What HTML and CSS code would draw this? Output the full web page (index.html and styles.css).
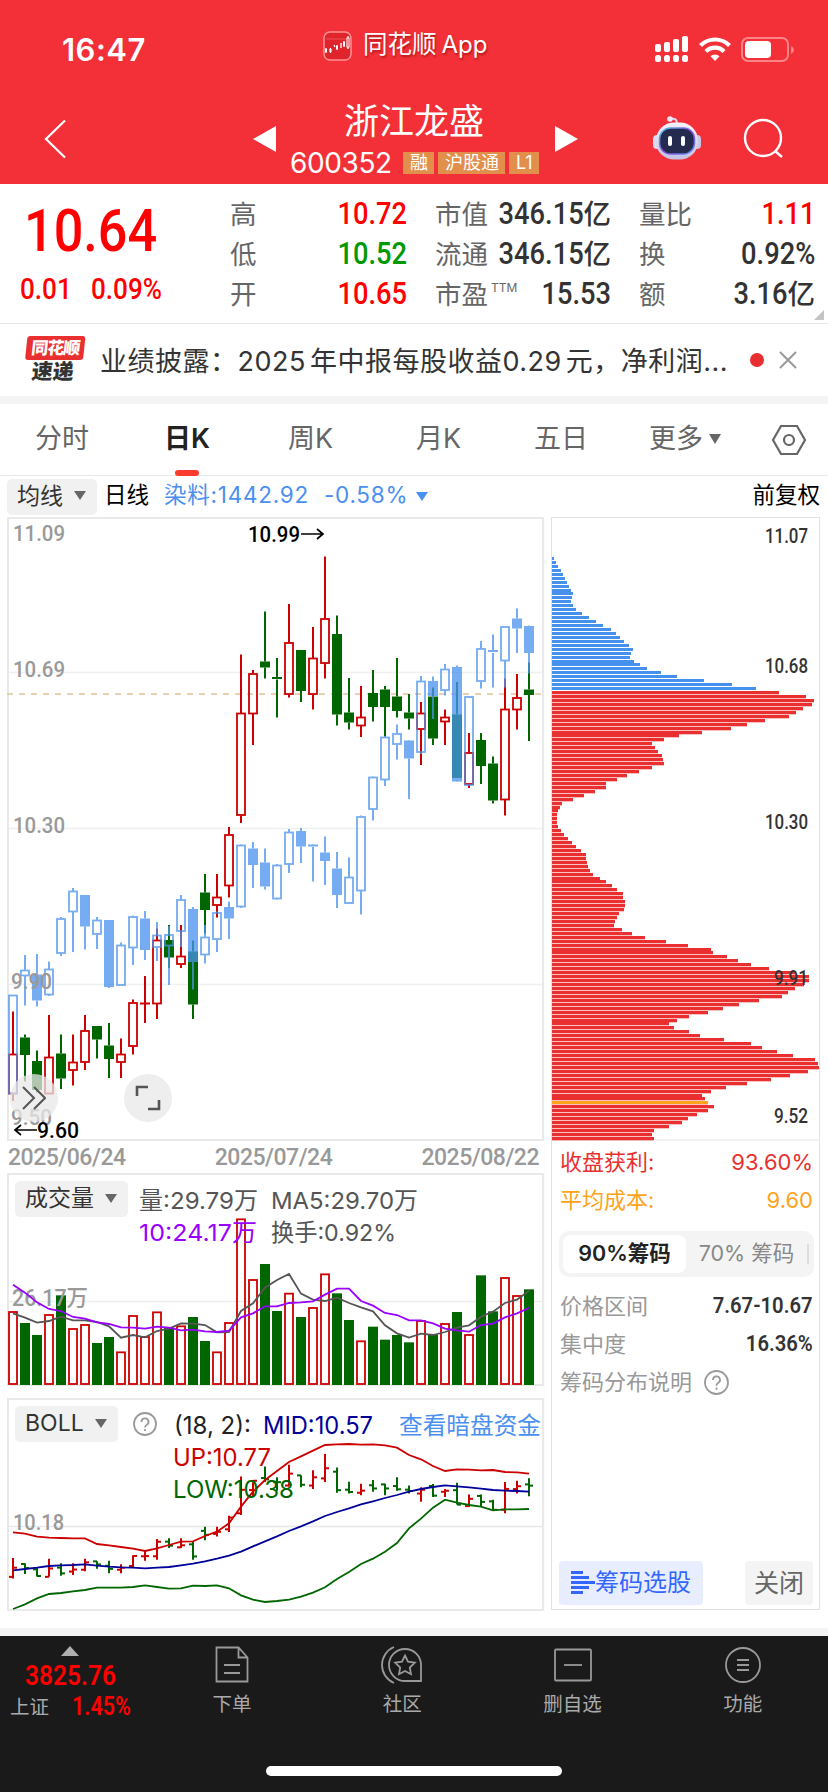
FILE: index.html
```html
<!DOCTYPE html>
<html lang="zh-CN">
<head>
  <meta charset="UTF-8">
  <title>浙江龙盛 600352</title>
  <link rel="stylesheet" href="styles.css">
</head>
<body>

<div class="app">
  <header class="top">
    <div class="status">
      <span class="clock">16:47</span>
      <span class="brand">
        <svg width="29" height="30" viewBox="0 0 29 30">
          <rect x="1" y="1" width="27" height="28" rx="6" fill="#e0242c" stroke="#ff9094" stroke-width="1.5"/>
          <path d="M3 8h23" stroke="#ee5055" stroke-width="1"/>
          <path d="M3 17v5M7.500 17v5M11 14l1 2M14 14v5M18 12v5M21 10v6M25 5v13" stroke="#fff" stroke-width="1.300"/>
          <path d="M2 18h2v3H2zM6.500 18h2v3h-2zM13 15h2v3h-2zM20 11h2v4h-2z" fill="#fff"/>
          <rect x="24" y="7" width="2" height="9" fill="#e0242c" stroke="#fff"/>
        </svg>
        <span>同花顺<i>App</i></span>
      </span>
      <span class="signals">
        <svg width="34" height="27" viewBox="0 0 34 27" fill="#fff">
          <rect x="0" y="8" width="6" height="8" rx="2"/><rect x="9" y="6" width="6" height="10" rx="2"/>
          <rect x="18" y="3" width="6" height="13" rx="2"/><rect x="27" y="0" width="6" height="16" rx="2"/>
          <rect x="0" y="19" width="6" height="7" rx="2.500"/><rect x="9" y="19" width="6" height="7" rx="2.500"/>
          <rect x="18" y="19" width="6" height="7" rx="2.500"/><rect x="27" y="19" width="6" height="7" rx="2.500"/>
        </svg>
        <svg width="32" height="25" viewBox="0 0 32 25" fill="none" stroke="#fff" stroke-width="4.200">
          <path d="M1.500 8.500a20.500 20.500 0 0 1 29 0"/>
          <path d="M7 14.500a12.500 12.500 0 0 1 18 0"/>
          <path d="M11.500 19.200a6.500 6.500 0 0 1 9 0L16 24z" fill="#fff" stroke="none"/>
        </svg>
        <svg width="53" height="26" viewBox="0 0 53 26">
          <rect x="1" y="1" width="46" height="23" rx="6" fill="none" stroke="#fa8488" stroke-width="2"/>
          <rect x="4" y="4" width="26" height="17" rx="4" fill="#fff"/>
          <path d="M50 9q3 1.500 3 4t-3 4z" fill="#fa8488"/>
        </svg>
      </span>
    </div>
    <div class="nav">
      <svg class="back" width="23" height="40" viewBox="0 0 23 40"><path d="M21 1.500L2 20l19 18.500" fill="none" stroke="#fff" stroke-width="2.200"/></svg>
      <svg class="prev" width="23" height="26" viewBox="0 0 23 26"><path d="M23 0v26L0 13z" fill="#fff"/></svg>
      <div class="title">
        <h1>浙江龙盛</h1>
        <div class="code"><span>600352</span><b>融</b><b>沪股通</b><b>L1</b></div>
      </div>
      <svg class="next" width="23" height="26" viewBox="0 0 23 26"><path d="M0 0v26l23-13z" fill="#fff"/></svg>
      <svg class="robot" width="48" height="44" viewBox="0 0 48 44">
        <defs>
          <linearGradient id="shell" x1="0" y1="0" x2="0" y2="1"><stop offset="0" stop-color="#f6f2fb"/><stop offset="1" stop-color="#c3c2e2"/></linearGradient>
          <linearGradient id="rim" x1="0" y1="0" x2="1" y2="1"><stop offset="0" stop-color="#50c8e8"/><stop offset=".5" stop-color="#8a4be0"/><stop offset="1" stop-color="#5a8cf0"/></linearGradient>
        </defs>
        <path d="M17 3c6-1 7 1 7 5" fill="none" stroke="#d9d3ee" stroke-width="2"/>
        <circle cx="17" cy="3" r="2.800" fill="#ece8f7"/>
        <rect x="0" y="19" width="8" height="14" rx="4" fill="#dcdaf0"/>
        <rect x="40" y="19" width="8" height="14" rx="4" fill="#c9c8e6"/>
        <rect x="3" y="6.500" width="42" height="37" rx="18" fill="url(#shell)"/>
        <rect x="6.500" y="12" width="35" height="26" rx="11" fill="#252b4f" stroke="url(#rim)" stroke-width="1.500"/>
        <rect x="15" y="20" width="4" height="10" rx="2" fill="#fff"/><rect x="28" y="20" width="4" height="10" rx="2" fill="#fff"/>
      </svg>
      <svg class="search" width="42" height="42" viewBox="0 0 42 42" fill="none" stroke="#fff" stroke-width="2.400"><circle cx="20" cy="20" r="18"/><path d="M32 33l7 6"/></svg>
    </div>
  </header>

  <section class="quote">
    <div class="price">
      <strong class="din">10.64</strong>
      <p><span class="din">0.01</span><span class="din">0.09%</span></p>
    </div>
    <dl>
      <div><dt>高</dt><dd class="red"><span class="din">10.72</span></dd></div>
      <div><dt>低</dt><dd class="green"><span class="din">10.52</span></dd></div>
      <div><dt>开</dt><dd class="red"><span class="din">10.65</span></dd></div>
    </dl>
    <dl>
      <div><dt>市值</dt><dd><span class="din">346.15</span>亿</dd></div>
      <div><dt>流通</dt><dd><span class="din">346.15</span>亿</dd></div>
      <div><dt>市盈<sup>TTM</sup></dt><dd><span class="din">15.53</span></dd></div>
    </dl>
    <dl>
      <div><dt>量比</dt><dd class="red"><span class="din">1.11</span></dd></div>
      <div><dt>换</dt><dd><span class="din">0.92%</span></dd></div>
      <div><dt>额</dt><dd><span class="din">3.16</span>亿</dd></div>
    </dl>
    <svg class="corner" width="10" height="10" viewBox="0 0 10 10"><path d="M10 0v10H0z" fill="#c4c4c4"/></svg>
  </section>

  <section class="news">
    <div class="news-logo"><span>同花顺</span><em>速递</em></div>
    <p>业绩披露：<i>2025</i>年中报每股收益<i>0.29</i>元，净利润...</p>
    <span class="dot"></span>
    <svg width="18" height="18" viewBox="0 0 18 18"><path d="M1 1l16 16M17 1L1 17" stroke="#999" stroke-width="2"/></svg>
  </section>

  <nav class="tabs">
    <a>分时</a>
    <a class="active">日K</a>
    <a>周K</a>
    <a>月K</a>
    <a>五日</a>
    <a class="more">更多<svg width="12" height="10" viewBox="0 0 12 10"><path d="M0 0h12L6 10z" fill="#666"/></svg></a>
    <svg width="36" height="32" viewBox="0 0 36 32" fill="none" stroke="#666" stroke-width="2.200"><path d="M10 2h16l8 14-8 14H10L2 16z"/><circle cx="18" cy="16" r="5"/></svg>
  </nav>

  <div class="legend">
    <span class="pill">均线<svg width="12" height="9" viewBox="0 0 12 9"><path d="M0 0h12L6 9z" fill="#666"/></svg></span>
    <span class="day">日线</span>
    <span class="industry">染料:1442.92</span>
    <span class="industry pct">-0.58%</span>
    <svg width="12" height="9" viewBox="0 0 12 9"><path d="M0 0h12L6 9z" fill="#4a90f0"/></svg>
    <span class="adjust">前复权</span>
  </div>

  <main class="charts">
    <div class="left">
      <div class="panel kline">
        <svg id="kline" width="537" height="624" viewBox="7 517 537 624"></svg>
        <span class="round more-btn"><svg width="24" height="24" viewBox="0 0 24 24" fill="none" stroke="#555" stroke-width="2"><path d="M1 1l11 11L1 23M12 1l11 11-11 11"/></svg></span>
        <span class="round full-btn"><svg width="26" height="26" viewBox="0 0 26 26" fill="none" stroke="#555" stroke-width="2.600"><path d="M2 11V2h11M24 15v9H13"/></svg></span>
      </div>
      <div class="dates"><span>2025/06/24</span><span>2025/07/24</span><span>2025/08/22</span></div>
      <div class="panel volume">
        <svg id="volume" width="537" height="213" viewBox="7 1173 537 213"></svg>
        <span class="pill">成交量<svg width="12" height="9" viewBox="0 0 12 9"><path d="M0 0h12L6 9z" fill="#666"/></svg></span>
      </div>
      <div class="panel boll">
        <svg id="boll" width="537" height="213" viewBox="7 1398 537 213"></svg>
        <span class="pill">BOLL<svg width="12" height="9" viewBox="0 0 12 9"><path d="M0 0h12L6 9z" fill="#666"/></svg></span>
      </div>
    </div>

    <aside class="chips">
      <svg id="chips" width="268" height="623" viewBox="552 518 268 623"></svg>
      <div class="chip-info">
        <p class="gain"><span>收盘获利:</span><b>93.60%</b></p>
        <p class="cost"><span>平均成本:</span><b>9.60</b></p>
        <div class="segment"><span class="on">90%筹码</span><span>70% 筹码</span></div>
        <p><span>价格区间</span><b class="din">7.67-10.67</b></p>
        <p><span>集中度</span><b class="din">16.36%</b></p>
        <p class="explain"><span>筹码分布说明</span><svg width="25" height="25" viewBox="0 0 25 25" fill="none" stroke="#999" stroke-width="1.800"><circle cx="12.500" cy="12.500" r="11.500"/><path d="M9 10a3.500 3.500 0 1 1 5 3q-1.500.8-1.500 2.800M12.500 17.500v2.200"/></svg></p>
      </div>
      <div class="chip-actions">
        <span class="pick"><svg width="24" height="24" viewBox="0 0 24 24" fill="#3366ff"><path d="M0 0h12v3H0zM0 5h18v3H0zM0 10h24v3H0zM0 15h18v3H0zM0 20h12v3H0z"/></svg>筹码选股</span>
        <span class="close">关闭</span>
      </div>
    </aside>
  </main>

  <footer class="bar">
    <div class="items">
      <div class="index">
        <svg width="18" height="10" viewBox="0 0 18 10"><path d="M9 0l9 10H0z" fill="#b0b0b0"/></svg>
        <b class="din">3825.76</b>
        <p><span>上证</span><b class="din">1.45%</b></p>
      </div>
      <div class="item">
        <svg width="40" height="40" viewBox="0 0 40 40"><path d="M4.500 2.500h22l9 10v24h-31zM26.500 2.500v10h9M12 20h16M12 28h16"/></svg>
        <span>下单</span>
      </div>
      <div class="item">
        <svg width="42" height="40" viewBox="0 0 42 40"><path d="M24 4a16 16 0 0 1 16 16v16H24a16 16 0 0 1 0-32zM13 2a19.500 19.500 0 0 0 0 36M24 10.500l3 6.200 6.800 1-5 4.800 1.200 6.700-6-3.200-6 3.200 1.200-6.700-5-4.800 6.800-1z"/></svg>
        <span>社区</span>
      </div>
      <div class="item">
        <svg width="40" height="40" viewBox="0 0 40 40"><rect x="2" y="4.500" width="36" height="31" rx="1"/><path d="M11 20h18"/></svg>
        <span>删自选</span>
      </div>
      <div class="item">
        <svg width="40" height="40" viewBox="0 0 40 40"><circle cx="20" cy="20" r="17"/><path d="M14 15h12M14 20h12M14 25h12"/></svg>
        <span>功能</span>
      </div>
    </div>
    <div class="home"></div>
  </footer>
</div>

<script src="charts.js"></script>
</body>
</html>
```
FILE: styles.css
```css
body {
  margin: 0;
  background: #fff;
  font-family: Inter, 'Noto Sans CJK SC', sans-serif;
  color: #333;
}

.app {
  width: 828px;
  height: 1792px;
  overflow: hidden;
  display: flex;
  flex-direction: column;
}

svg {
  display: block;
  flex: none;
}

h1, p, dl, dd {
  margin: 0;
}

i, em {
  font-style: normal;
}

.din {
  font-family: Roboto, sans-serif;
  font-weight: 500;
  display: inline-block;
}

.red {
  color: #ff0000;
}

.green {
  color: #009900;
}

/* header */
.top {
  background: #f33038;
  color: #fff;
  height: 184px;
}

.status {
  height: 94px;
  display: flex;
  align-items: center;
  padding: 5px 34px 0 62px;
  box-sizing: border-box;
}

.clock {
  width: 170px;
  font-size: 31px;
  font-weight: 600;
  letter-spacing: 0.5px;
}

.brand {
  display: flex;
  gap: 11px;
  align-items: center;
  font-size: 24.5px;
  line-height: 30px;
  margin-top: -8px;
  margin-left: 91px;
  text-shadow: 1px 2px 2px rgba(120, 0, 0, .5);
}

.brand span {
  margin-top: -2px;
}

.brand i {
  margin-left: 5px;
  font-size: 24px;
}

.signals {
  display: flex;
  gap: 10px;
  align-items: center;
  margin-left: auto;
}

.nav {
  height: 90px;
  display: flex;
  align-items: center;
  padding: 0 43px 0 44px;
}

.prev {
  margin-left: 186px;
}

.title {
  width: 280px;
  text-align: center;
}

h1 {
  font-size: 35px;
  line-height: 44px;
  font-weight: 400;
  margin-left: -3px;
}

.code {
  display: flex;
  gap: 4px;
  align-items: center;
  margin-left: 14px;
  margin-top: 3px;
}

.code span {
  width: 109px;
  text-align: left;
  font-size: 28px;
  line-height: 34px;
  letter-spacing: -0.4px;
}

.code b {
  background: #e28f4b;
  font-size: 18px;
  font-weight: 400;
  line-height: 22px;
  height: 22px;
  padding: 0 6px 0 7px;
}

.robot {
  margin-left: 75px;
  margin-top: -2px;
}

.search {
  margin-left: 42px;
}

/* quote */
.quote {
  height: 140px;
  box-sizing: border-box;
  border-bottom: 1px solid #e6e6e6;
  display: grid;
  grid-template-columns: 202px 177px 176px 176px;
  column-gap: 28px;
  padding-top: 10px;
  position: relative;
}

.price {
  color: #ff0000;
}

.price strong {
  font-size: 60px;
  line-height: 72px;
  margin: 1px 0 0 24px;
  transform: scaleX(.87);
  transform-origin: left;
}

.price p {
  display: flex;
  margin: 6px 0 0 20px;
  font-size: 30px;
  line-height: 32px;
}

.price p span {
  width: 71px;
  transform: scaleX(.87);
  transform-origin: left;
}

.quote dl div {
  height: 40px;
  line-height: 40px;
  display: flex;
  justify-content: space-between;
}

.quote dt {
  font-size: 26.5px;
  color: #666;
  white-space: nowrap;
}

.quote sup {
  font-size: 12px;
  vertical-align: 12px;
  line-height: 0;
  margin-left: 3px;
}

.quote dd {
  font-size: 27.5px;
  font-weight: 500;
  white-space: nowrap;
}

.quote dd .din {
  font-size: 31px;
  margin-left: -24px;
  transform: scaleX(.88);
  transform-origin: right;
}

.corner {
  position: absolute;
  right: 4px;
  bottom: 3px;
}

/* news */
.news {
  height: 72px;
  border-bottom: 8px solid #f4f4f4;
  display: flex;
  align-items: center;
}

.news-logo {
  width: 58px;
  margin-left: 25px;
  text-align: center;
  font-weight: 900;
  line-height: 24px;
  transform: skewX(-6deg);
}

.news-logo span {
  display: block;
  background: #ea2f30;
  color: #fff;
  font-size: 17px;
  letter-spacing: -1px;
  border-radius: 3px;
}

.news-logo em {
  display: block;
  font-size: 21px;
}

.news p {
  width: 644px;
  margin-left: 17px;
  margin-top: -2px;
  font-size: 27px;
  letter-spacing: 0.5px;
  white-space: nowrap;
}

.news i {
  margin-right: 4px;
}

.dot {
  width: 14px;
  height: 14px;
  border-radius: 50%;
  background: #ea2f30;
  margin: 0 15px 0 6px;
}

/* tabs */
.tabs {
  height: 72px;
  box-sizing: border-box;
  border-bottom: 1px solid #e8e8e8;
  display: flex;
  align-items: center;
  padding-left: 35px;
  font-size: 27px;
  color: #666;
}

.tabs a {
  width: 124px;
  position: relative;
  line-height: 34px;
  margin-top: -2px;
}

.tabs a:first-child {
  width: 129px;
}

.tabs a:nth-child(2) {
  width: 124px;
}

.tabs a:nth-child(3) {
  width: 128px;
}

.tabs a:nth-child(4) {
  width: 118px;
}

.tabs a:nth-child(5) {
  width: 115px;
}

.tabs .active {
  color: #222;
  font-weight: 600;
}

.tabs .active::after {
  content: "";
  position: absolute;
  left: 11px;
  bottom: -20px;
  width: 24px;
  height: 6px;
  border-radius: 3px;
  background: #fa3b30;
}

.tabs .more {
  width: 122px;
  display: flex;
  align-items: center;
  gap: 6px;
}

/* legend row */
.legend {
  height: 41px;
  display: flex;
  align-items: center;
  font-size: 22.5px;
  line-height: 32px;
  color: #000;
  padding: 0 8px 0 7px;
}

.legend > span:not(.pill) {
  margin-top: -4px;
}

.pill {
  display: flex;
  align-items: center;
  gap: 11px;
  height: 36px;
  line-height: 34px;
  box-sizing: border-box;
  padding: 0 11px 2px 10px;
  border-radius: 5px;
  background: #f1f1f1;
  color: #333;
  font-size: 23px;
}

.legend .day {
  margin-left: 7px;
}

.industry {
  color: #4a90f0;
  margin-left: 15px;
  letter-spacing: 0.75px;
}

.pct {
  margin-right: 8px;
}

.legend .adjust {
  margin-left: auto;
}

/* charts */
.charts {
  display: flex;
  gap: 7px;
  padding-left: 7px;
  height: 1111px;
  border-bottom: 8px solid #f4f4f4;
}

.left {
  width: 537px;
}

.panel {
  position: relative;
}

.panel .pill {
  position: absolute;
  left: 8px;
  top: 8px;
}

.round {
  position: absolute;
  width: 48px;
  height: 48px;
  border-radius: 50%;
  background: rgba(232, 232, 232, .75);
  display: flex;
  align-items: center;
  justify-content: center;
}

.more-btn {
  left: 3px;
  bottom: 19px;
}

.full-btn {
  left: 117px;
  bottom: 19px;
}

.dates {
  height: 32px;
  line-height: 33px;
  display: flex;
  justify-content: space-between;
  padding: 0 5px 0 1px;
  font-family: Roboto, sans-serif;
  font-size: 23px;
  font-weight: 500;
  letter-spacing: -0.5px;
  color: #999;
}

.volume {
  margin-bottom: 12px;
}

svg text {
  font-family: Inter, 'Noto Sans CJK SC', sans-serif;
}

svg .num {
  font-family: Roboto, 'Noto Sans CJK SC', sans-serif;
  font-weight: 500;
}

.chips {
  width: 267px;
  height: 1091px;
  border: 1px solid #e2e2e2;
  display: flex;
  flex-direction: column;
  font-size: 22px;
}

.chip-info {
  padding: 2px 6px 0 8px;
}

.chip-info p {
  display: flex;
  justify-content: space-between;
  height: 38px;
  line-height: 38px;
  color: #999;
}

.chip-info b {
  font-weight: 400;
}

.chip-info b.din {
  font-weight: 600;
  font-size: 22px;
  color: #333;
  transform: scaleX(.92);
  transform-origin: right;
}

.chip-info .gain {
  color: #e93030;
}

.chip-info .cost {
  color: #fda31c;
}

.segment {
  display: flex;
  align-items: center;
  height: 46px;
  box-sizing: border-box;
  background: #f4f4f4;
  border-radius: 10px;
  margin: 12px -1px 10px;
  padding: 4px;
  color: #888;
}

.segment::after {
  content: "";
  width: 2px;
  height: 20px;
  background: #ddd;
}

.segment span {
  width: 121px;
  font-size: 21.5px;
  line-height: 36px;
  height: 38px;
  text-align: center;
  border-radius: 8px;
}

.segment .on {
  width: 123px;
  background: #fff;
  color: #222;
  font-weight: 600;
}

.chip-info .explain {
  justify-content: flex-start;
  align-items: center;
  gap: 12px;
}

.chip-actions {
  margin-top: auto;
  padding: 0 6px 4px 7px;
  display: flex;
  justify-content: space-between;
}

.pick, .close {
  height: 44px;
  line-height: 44px;
  border-radius: 4px;
  display: flex;
  align-items: center;
}

.pick {
  background: #e8eeff;
  color: #3366ff;
  font-size: 24px;
  padding: 0 12px;
}

.close {
  background: #f4f4f4;
  color: #666;
  font-size: 25px;
  padding: 0 9px;
}

/* bottom bar */
.bar {
  flex: 1;
  background: #1a1a1a;
  color: #aaa;
}

.items {
  display: flex;
  height: 130px;
}

.index {
  width: 147px;
  padding-top: 10px;
}

.index svg {
  margin-left: 61px;
}

.index .din {
  color: #ff0000;
  font-weight: 600;
}

.index > .din {
  font-size: 28.5px;
  line-height: 34px;
  margin: 3px 0 0 25px;
  transform: scaleX(.86);
  transform-origin: left;
}

.index p {
  display: flex;
  font-size: 19.5px;
  line-height: 24px;
  padding: 2px 0 0 10px;
}

.index p .din {
  font-size: 25px;
  margin-left: 23px;
  transform: scaleX(.86);
  transform-origin: left;
}

.item {
  flex: 1;
  display: flex;
  flex-direction: column;
  align-items: center;
  padding-top: 9px;
}

.item svg {
  fill: none;
  stroke: #999;
  stroke-width: 1.8;
}

.item span {
  font-size: 19.5px;
  line-height: 24px;
  margin-top: 7px;
}

.home {
  width: 296px;
  height: 10px;
  border-radius: 5px;
  background: #fff;
  margin: 0 auto;
}
```
FILE: charts.js
```js
const RED = '#cc0000';
const GREEN = '#006600';

// [up, high, body top, body bottom, low]
const candles = [
  [1,1215,1316,1411,1428],[0,1270,1277,1319,1382],[0,1308,1333,1402,1408],[1,1224,1324,1411,1411],
  [0,1270,1315,1375,1400],[1,1270,1335,1356,1391],[1,1224,1260,1337,1354],[0,1250,1250,1282,1327],
  [0,1243,1296,1328,1373],[1,1279,1316,1337,1373],[1,1187,1194,1299,1318],[1,1131,1195,1197,1243],
  [1,1018,1046,1197,1233],[0,1010,1045,1087,1112],[1,1010,1083,1104,1112],[0,1047,1073,1199,1233],
  [0,889,933,974,1030],[1,889,943,964,992],[1,777,795,917,945],[1,367,506,750,768],
  [1,404,412,509,582],[0,265,384,398,424],[0,376,422,427,517],[1,247,338,462,469],
  [0,356,356,454,480],[1,302,376,462,498],[1,134,282,388,424],[0,274,318,510,536],
  [0,423,505,529,545],[1,442,515,537,563],[0,404,459,492,526],[0,442,450,492,562],
  [0,376,467,501,517],[0,461,505,519,545],[1,480,506,545,630],[0,445,467,567,582],
  [1,498,516,527,582],[0,432,510,660,660],[1,554,600,676,684],[0,554,570,632,675],
  [0,609,626,714,721],[1,424,497,713,750],[1,413,469,499,545],[0,386,450,463,573]
];

// industry index drawn over the stock
const industry = [
  [1,1176,1176,1411,1411],[1,1081,1117,1131,1201],[0,1079,1128,1189,1203],[1,1096,1114,1176,1178],
  [1,991,994,1077,1083],[1,922,929,979,1074],[0,938,938,1013,1068],[1,991,998,1032,1067],
  [0,998,998,1157,1160],[1,1051,1057,1154,1154],[1,987,990,1064,1105],[0,977,994,1069,1093],
  [1,1003,1033,1063,1095],[1,1012,1032,1060,1152],[1,939,949,1025,1062],[0,967,972,1098,1163],
  [1,1010,1038,1081,1101],[1,978,980,1044,1074],[0,954,967,994,1043],[1,818,820,967,969],
  [0,813,828,867,922],[0,828,861,918,925],[1,865,867,948,949],[1,782,789,866,886],
  [0,779,787,823,862],[1,818,820,824,907],[0,799,837,858,915],[0,836,875,939,969],
  [1,849,896,959,960],[1,750,752,929,985],[1,657,658,735,761],[1,561,563,665,679],
  [1,534,555,581,617],[0,570,572,614,710],[1,418,430,600,603],[0,419,430,466,520],
  [1,390,402,453,465],[0,393,397,669,670],[1,466,467,678,680],[1,335,353,431,448],
  [1,320,358,363,445],[1,299,300,383,445],[0,258,281,305,363],[0,298,299,364,412]
];

const volumes = [513,549,585,522,466,564,552,609,591,634,525,588,514,562,556,531,603,634,546,235,417,372,
  513,458,531,501,400,460,540,601,560,599,585,607,540,585,549,516,582,406,514,411,465,448];
const ma5 = [520,533,548,543,530,541,541,546,559,593,585,592,573,566,550,551,555,577,576,513,490,443,
  420,402,461,479,483,473,489,502,514,556,580,593,581,585,576,563,556,530,515,489,479,452];
const ma10 = [434,458,487,507,513,531,536,547,552,562,563,566,560,563,571,569,574,576,572,532,520,499,
  499,489,487,484,464,446,446,483,497,519,525,541,541,550,566,571,575,555,551,532,520,504];

const up = [427,431,440,443,444,445,445,462,466,471,476,483,475,465,455,454,438,425,400,350,305,270,
  243,216,199,182,165,163,162,164,163,166,173,195,208,228,243,238,239,241,240,246,247,251];
const mid = [541,537,533,528,526,525,523,527,530,532,533,535,533,531,526,521,514,506,497,485,469,454,
  439,423,409,394,378,366,355,343,334,324,315,305,297,291,286,289,292,296,300,302,303,305];
const low = [657,643,625,612,609,604,600,593,593,593,591,586,591,596,595,587,588,586,595,616,629,636,
  633,629,620,608,592,567,546,522,506,485,459,415,386,353,329,338,345,350,361,358,358,357];

// chip rows, grouped by the y of the first row in each group
const chips = [
  [557,[42,48,54,63,69,75,81,87,93]],
  [592,[99,96,93,99,108,126,147,168,189,213,228,240,252,267,279,273,270,282]],
  [663,[300,321,363,411,492,576,648,717,798,822,816,789,768,747,675,621,573,486]],
  [734,[417,372,336,345,354,366,369,372,336,297,261,231,198,198,165,132,99,66,60]],
  [809,[54,51,51,51,54,63,72,84,96,108,123,138,138,141,144,150,159,180]],
  [880,[198,216,231,249,249,255,255,252,237,231,225,222,246,276,315,378,444,513]],
  [951,[519,561,594,633,687,768,807,807,792,765,744,726,657,597,549,504,447,411]],
  [1022,[387,402,447,480,552,633,666,711,759,825,834,837,804,750,693,621,558,513,486]],
  [1097,[495,504,522,504,471,444,426,387,342,336,342]]
];

const cx = i => 13 + 12 * i;
const rect = (x, y, w, h, attrs) => `<rect x="${x}" y="${y}" width="${w}" height="${h}" ${attrs}/>`;
const line = (x1, y1, x2, y2, color, w = 2) => `<path d="M${x1} ${y1}L${x2} ${y2}" stroke="${color}" stroke-width="${w}"/>`;
const text = (s, x, y, w, size, color, cls = 'num') =>
  `<text class="${cls}" x="${x}" y="${y}" textLength="${w}" lengthAdjust="spacingAndGlyphs" font-size="${size}" fill="${color}">${s}</text>`;
const poly = (list, y, color) =>
  `<polyline points="${list.map((v, i) => cx(i) + ',' + y(v)).join(' ')}" fill="none" stroke="${color}" stroke-width="1.8"/>`;
const frame = (y, h) => rect(8, y, 535, h, 'fill="none" stroke="#e9e9e9" stroke-width="2"');

function drawCandle(c, i, color) {
  const [hollow, hi, top, bottom, lo] = [c[0], ...c.slice(1).map(v => Math.round((500 + v / 2.376) * 2) / 2)];
  const x = cx(i);
  let s = '';
  if (hi < top) s += line(x, hi, x, top, color);
  if (lo > bottom) s += line(x, bottom, x, lo, color);
  if (bottom - top < 3) s += rect(x - 5, top - .5, 10, 2, `fill="${color}"`);
  else if (hollow) s += rect(x - 4, top + .5, 8, bottom - top - 1, `fill="none" stroke="${color}" stroke-width="1.8"`);
  else s += rect(x - 5, top, 10, bottom - top, `fill="${color}"`);
  return s;
}

function drawKline() {
  let s = frame(518, 622);
  [672.5, 828.5, 984.5].forEach(y => s += line(9, y, 542, y, '#f0f0f0', 1.5));
  s += '<path d="M7 694H542" stroke="#e0c49a" stroke-width="1.5" stroke-dasharray="6 6"/>';
  candles.forEach((c, i) => s += drawCandle(c, i, c[0] ? RED : GREEN));
  s += '<g opacity=".76">';
  industry.forEach((c, i) => s += drawCandle(c, i, '#4a93ee'));
  s += '</g>';
  s += text('11.09', 13, 541, 52, 22.5, '#999');
  s += text('10.69', 13, 677, 52, 22.5, '#999');
  s += text('10.30', 13, 833, 52, 22.5, '#999');
  s += text('9.90', 11, 989, 41, 22.5, '#999');
  s += text('9.50', 11, 1125, 41, 22.5, '#999');
  s += text('10.99', 248, 542, 52, 22, '#000');
  s += '<path d="M301 534h22M317 529l6 5-6 5" fill="none" stroke="#000" stroke-width="1.7"/>';
  s += text('9.60', 37, 1138, 42, 22, '#000');
  s += '<path d="M37 1130H15M21 1125l-6 5 6 5" fill="none" stroke="#000" stroke-width="1.7"/>';
  document.getElementById('kline').innerHTML = s;
}

function drawVolume() {
  const y = v => 1140 + v / 3;
  let s = frame(1174, 211);
  s += line(9, 1301.5, 542, 1301.5, '#ececec', 1.5);
  volumes.forEach((v, i) => {
    const h = 1385 - y(v);
    s += candles[i][0]
      ? rect(cx(i) - 4, y(v) + 1, 8, h - 2, `fill="none" stroke="${RED}" stroke-width="1.8"`)
      : rect(cx(i) - 5, y(v), 10, h, `fill="${GREEN}"`);
  });
  s += text('26.17万', 12, 1306, 76, 23, '#999');
  s += poly(ma5, y, '#555') + poly(ma10, y, '#9900ff');
  s += text('量:29.79万', 139, 1208.5, 119, 23.5, '#555', '');
  s += text('MA5:29.70万', 271, 1208.5, 147, 23.5, '#555', '');
  s += text('10:24.17万', 139, 1240.5, 118, 23.5, '#9900ff', '');
  s += text('换手:0.92%', 271, 1240.5, 125, 23.5, '#555', '');
  document.getElementById('volume').innerHTML = s;
}

function drawBoll() {
  const y = v => 1390 + v / 3;
  const p = v => y(192 + (v - 134) * .2886);
  let s = frame(1399, 211);
  s += line(9, 1526.5, 542, 1526.5, '#e8e8e8', 1.5);
  s += text('10.18', 13, 1530, 51, 22.5, '#999');
  candles.forEach((c, i) => {
    const x = cx(i), color = c[0] ? RED : GREEN;
    const open = p(c[0] ? c[3] : c[2]), close = p(c[0] ? c[2] : c[3]);
    s += line(x, p(c[1]), x, p(c[4]), color);
    s += line(x - 4, open, x, open, color) + line(x, close, x + 4, close, color);
  });
  s += poly(up, y, RED) + poly(mid, y, '#000099') + poly(low, y, GREEN);
  s += '<circle cx="145" cy="1424" r="11" fill="none" stroke="#999" stroke-width="1.8"/>';
  s += '<path d="M141.500 1422a3.500 3.500 0 1 1 5 3q-1.500.8-1.500 2.600M145 1429v2" fill="none" stroke="#999" stroke-width="1.8"/>';
  s += text('(18, 2):', 174, 1433.5, 77, 24, '#222', '');
  s += text('MID:10.57', 263, 1433.5, 110, 24, '#000099', '');
  s += text('查看暗盘资金', 399, 1433.5, 142, 23.5, '#4a90f0', '');
  s += text('UP:10.77', 173, 1465.5, 98, 24, RED, '');
  s += text('LOW:10.38', 173, 1497.5, 121, 24, GREEN, '');
  document.getElementById('boll').innerHTML = s;
}

function drawChips() {
  let s = line(552, 1140, 819, 1140, '#eee', 1.5);
  chips.forEach(([start, rows], g) => rows.forEach((v, i) => {
    const y = start + i * 4, w = (v - 36) / 3;
    let color = y < 690 ? '#4691ee' : '#ea2f30';
    if (g === 8 && i === 1) color = '#fda31c';
    s += rect(552, y, w, 3, `fill="${color}"`);
    if (y > 690) s += rect(552, y + 3, w, 1, 'fill="#ea2f30" opacity=".3"');
  }));
  s += text('11.07', 765, 543, 43, 20, '#333');
  s += text('10.68', 765, 673, 43, 20, '#333');
  s += text('10.30', 765, 829, 43, 20, '#333');
  s += text('9.91', 774, 985, 34, 20, '#333');
  s += text('9.52', 774, 1123, 34, 20, '#333');
  document.getElementById('chips').innerHTML = s;
}

drawKline();
drawVolume();
drawBoll();
drawChips();
```
